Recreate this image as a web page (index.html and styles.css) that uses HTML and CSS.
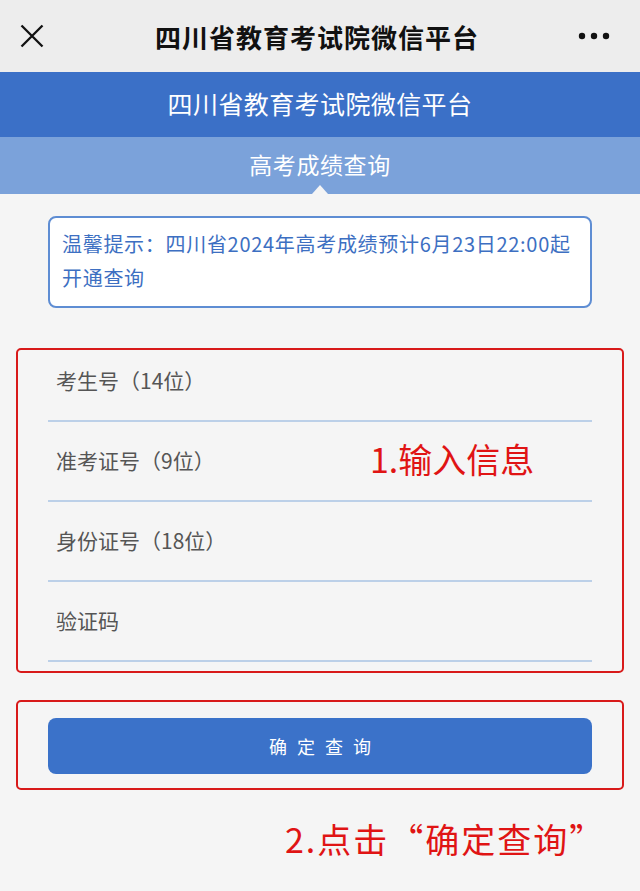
FILE: index.html
```html
<!DOCTYPE html>
<html lang="zh-CN">
<head>
<meta charset="utf-8">
<title>四川省教育考试院微信平台</title>
<link rel="stylesheet" href="styles.css">
</head>
<body>
<div class="nav">
  <svg class="nav-close" width="24" height="24" viewBox="0 0 24 24"><path d="M1.5 1.5 L22.5 22.5 M22.5 1.5 L1.5 22.5" stroke="#111" stroke-width="2.3" fill="none"/></svg>
  <div class="nav-title">四川省教育考试院微信平台</div>
  <svg class="nav-more" width="32" height="8" viewBox="0 0 32 8"><circle cx="4" cy="4" r="3.2" fill="#111"/><circle cx="16" cy="4" r="3.2" fill="#111"/><circle cx="28" cy="4" r="3.2" fill="#111"/></svg>
</div>
<div class="header">四川省教育考试院微信平台</div>
<div class="band">高考成绩查询</div>
<div class="notice">温馨提示：四川省2024年高考成绩预计6月23日22:00起开通查询</div>
<div class="form-box">
  <div class="row first"><span class="label">考生号（14位）</span></div>
  <div class="row"><span class="label">准考证号（9位）</span></div>
  <div class="row"><span class="label">身份证号（18位）</span></div>
  <div class="row"><span class="label">验证码</span></div>
  <div class="annot annot-1">1.输入信息</div>
</div>
<div class="btn-box">
  <div class="btn">确 定 查 询</div>
</div>
<div class="annot-2">2.点击“确定查询”</div>
</body>
</html>
```
FILE: styles.css
```css
* { box-sizing: border-box; }
html, body { margin: 0; padding: 0; }
body {
  background: #f5f5f5;
  font-family: "Noto Sans CJK SC", "Noto Sans", sans-serif;
  width: 640px;
  min-height: 891px;
}
.nav {
  height: 72px;
  background: #ededed;
  display: flex;
  align-items: center;
  justify-content: space-between;
  padding: 0 30px 0 20px;
}
.nav-close { display: block; margin-top: 0; }
.nav-title {
  font-size: 26px;
  font-weight: 700;
  color: #111;
  letter-spacing: 1px;
  margin-left: 12px;
}
.nav-more { display: block; }
.header {
  height: 65px;
  background: #3b70c7;
  color: #fff;
  font-size: 25px;
  letter-spacing: 0.4px;
  display: flex;
  align-items: center;
  justify-content: center;
  padding-bottom: 3px;
}
.band {
  height: 57px;
  background: #7ba2da;
  color: #fff;
  font-size: 23px;
  letter-spacing: 0.6px;
  display: flex;
  align-items: center;
  justify-content: center;
  position: relative;
  padding-bottom: 4px;
}
.band::after {
  content: "";
  position: absolute;
  left: 312px;
  bottom: 0;
  border-left: 8px solid transparent;
  border-right: 8px solid transparent;
  border-bottom: 9px solid #f5f5f5;
}
.notice {
  margin: 22px 48px 0;
  height: 92px;
  background: #fff;
  border: 2px solid #5e8dd3;
  border-radius: 8px;
  padding: 9px 12px 0 12px;
  color: #3d6fc2;
  font-size: 20px;
  line-height: 34px;
  letter-spacing: 0.7px;
  font-weight: 400;
}
.form-box {
  position: relative;
  margin: 40px 16px 0;
  height: 325px;
  border: 2px solid #d81a1a;
  border-radius: 5px;
  padding: 0 30px;
}
.row {
  padding: 24px 8px 26px;
  border-bottom: 2px solid #bcd0e8;
}
.row.first { padding-top: 16px; }
.label {
  display: block;
  font-size: 21px;
  line-height: 28px;
  color: #555;
}
.annot {
  position: absolute;
  color: #e01414;
  font-size: 34px;
  line-height: 44px;
  font-weight: 400;
}
.annot-1 { left: 352px; top: 87px; }
.btn-box {
  margin: 27px 16px 0;
  height: 90px;
  border: 2px solid #d81a1a;
  border-radius: 5px;
  padding: 16px 30px 0;
}
.btn {
  height: 56px;
  background: #3b72c9;
  border-radius: 8px;
  color: #fff;
  font-size: 18px;
  letter-spacing: 3px;
  display: flex;
  align-items: center;
  justify-content: center;
  padding-left: 3px;
  font-weight: 400;
}
.annot-2 {
  margin-top: 27px;
  padding-left: 285px;
  color: #e01414;
  font-size: 34px;
  line-height: 44px;
  font-weight: 400;
  letter-spacing: 2px;
}
```
